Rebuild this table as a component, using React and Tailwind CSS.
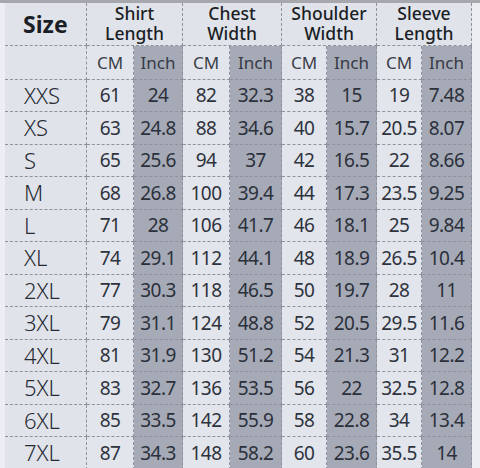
import React from "react";

const rows = [
  ["XXS", "61", "24", "82", "32.3", "38", "15", "19", "7.48"],
  ["XS", "63", "24.8", "88", "34.6", "40", "15.7", "20.5", "8.07"],
  ["S", "65", "25.6", "94", "37", "42", "16.5", "22", "8.66"],
  ["M", "68", "26.8", "100", "39.4", "44", "17.3", "23.5", "9.25"],
  ["L", "71", "28", "106", "41.7", "46", "18.1", "25", "9.84"],
  ["XL", "74", "29.1", "112", "44.1", "48", "18.9", "26.5", "10.4"],
  ["2XL", "77", "30.3", "118", "46.5", "50", "19.7", "28", "11"],
  ["3XL", "79", "31.1", "124", "48.8", "52", "20.5", "29.5", "11.6"],
  ["4XL", "81", "31.9", "130", "51.2", "54", "21.3", "31", "12.2"],
  ["5XL", "83", "32.7", "136", "53.5", "56", "22", "32.5", "12.8"],
  ["6XL", "85", "33.5", "142", "55.9", "58", "22.8", "34", "13.4"],
  ["7XL", "87", "34.3", "148", "58.2", "60", "23.6", "35.5", "14"],
];

const groups = [
  ["Shirt", "Length"],
  ["Chest", "Width"],
  ["Shoulder", "Width"],
  ["Sleeve", "Length"],
];

const font = { fontFamily: '"Noto Sans", "Open Sans", sans-serif' };

export default function App() {
  return (
    <div
      className="w-[480px] h-[468px] overflow-hidden bg-[#eceef3] border-t-[3px] border-[#a7a8ae] pl-[5px]"
      style={font}
    >
      <div className="grid grid-cols-[82px_47px_49px_47px_52px_45px_50px_45px_50px] grid-rows-[43px_33.5px_repeat(12,32.5px)] w-[467px]">
        {/* header row */}
        <div className="bg-[#e1e3ea] border-r border-b border-dashed border-[#8e929c] flex items-center pl-[18px] text-[23px] font-bold text-[#1b1e25]">
          Size
        </div>
        {groups.map((g, i) => (
          <div
            key={i}
            className="col-span-2 bg-[#e1e3ea] border-r border-b border-dashed border-[#8e929c] flex flex-col items-center justify-center text-[17.5px] leading-[20px] font-medium text-[#1b1e25] pb-[2px]"
          >
            <span>{g[0]}</span>
            <span>{g[1]}</span>
          </div>
        ))}
        {/* subheader row */}
        <div className="bg-[#e1e3ea] border-r border-b border-dashed border-[#8e929c]" />
        {groups.map((g, i) => (
          <React.Fragment key={i}>
            <div className="bg-[#e3e5ec] border-r border-b border-dashed border-[#8e929c] flex items-center justify-center text-[17px] text-[#3a3f4a]">
              CM
            </div>
            <div className="bg-[#a6aab6] border-r border-b border-dashed border-[#8e929c] flex items-center justify-center text-[17px] text-[#363b46]">
              Inch
            </div>
          </React.Fragment>
        ))}
        {/* data */}
        {rows.map((r, ri) => (
          <React.Fragment key={ri}>
            <div className="bg-[#e1e3ea] border-r border-b border-dashed border-[#8e929c] flex items-center pl-[19px] text-[22px] font-light text-[#262a33]">
              {r[0]}
            </div>
            {r.slice(1).map((v, ci) => (
              <div
                key={ci}
                className={
                  ci % 2 === 0
                    ? "bg-[#e3e5ec] border-r border-b border-dashed border-[#8e929c] flex items-center justify-center text-[19px] text-[#2e333d] tracking-[-0.5px]"
                    : "bg-[#a6aab6] border-r border-b border-dashed border-[#8e929c] flex items-center justify-center text-[19px] text-[#2b303b] tracking-[-0.5px]"
                }
              >
                {v}
              </div>
            ))}
          </React.Fragment>
        ))}
      </div>
    </div>
  );
}
